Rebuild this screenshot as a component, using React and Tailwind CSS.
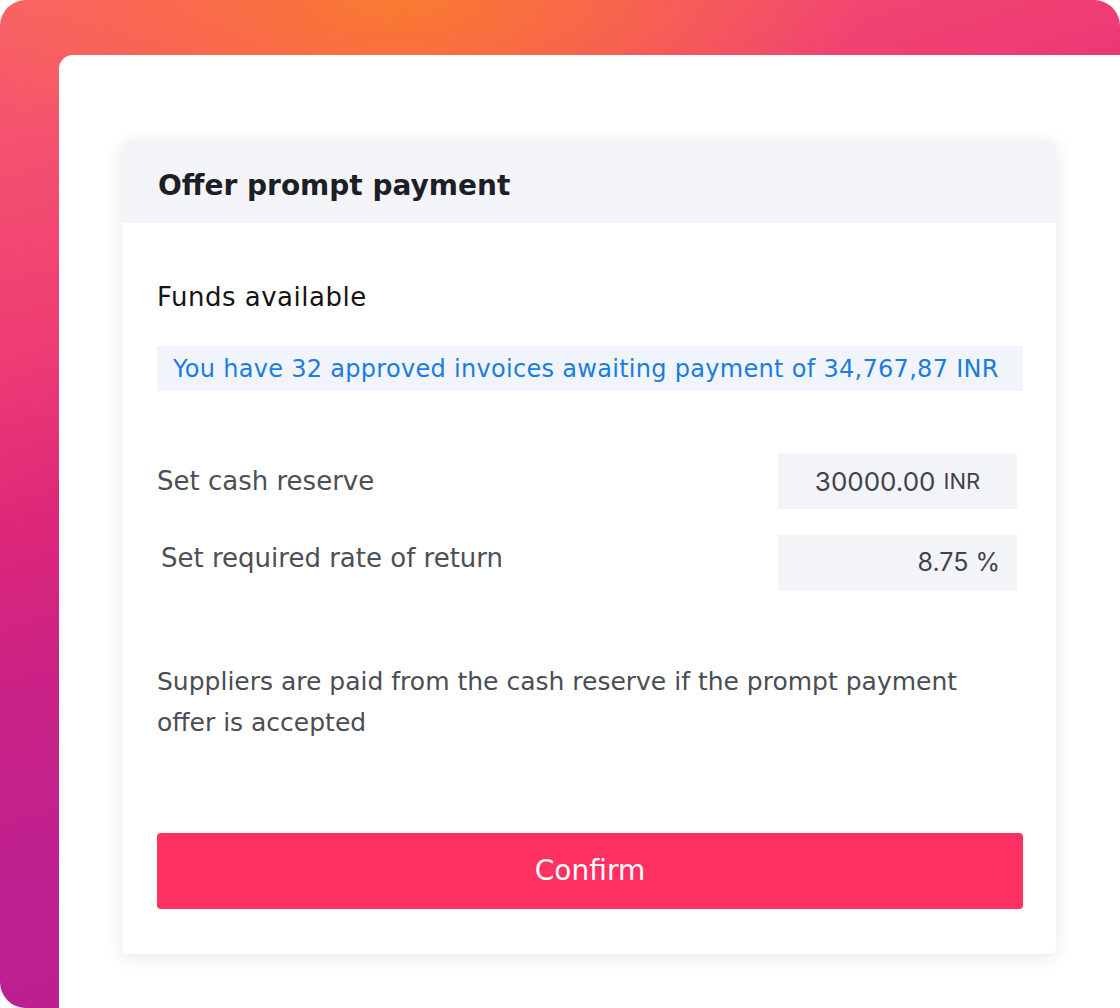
import React from "react";

const POP = "font-['DejaVu_Sans','Noto_Sans',sans-serif]";
const NUM = "font-['Inter','Noto_Sans',sans-serif]";

export default function App() {
  return (
    <div className={`h-[1008px] w-[1120px] overflow-hidden bg-white ${POP}`}>
      <div className="h-full w-full rounded-[26px] bg-[radial-gradient(ellipse_460px_220px_at_36%_0%,rgba(251,124,44,0.95)_0%,rgba(251,124,44,0)_100%),linear-gradient(163deg,#f8606b_0%,#ef3d74_26%,#dc2679_40%,#c92286_52%,#bd2090_68%,#bb2090_100%)] pl-[59px] pt-[55px]">
        <div className="h-full w-full rounded-tl-[14px] bg-white pl-[63px] pt-[85px]">
          <div className="w-[934px] overflow-hidden rounded-md bg-white shadow-[0_4px_18px_rgba(30,30,60,0.10)]">
            <div className="flex h-[83px] items-center bg-[#f4f5f9] px-9 pt-[9px]">
              <h1 className="text-[28px] font-semibold leading-[34px] text-[#1d1f27]">
                Offer prompt payment
              </h1>
            </div>

            <div className="px-[35px] pb-[45px] pt-[58px]">
              <div className="text-[26px] leading-[32px] tracking-[0.5px] text-[#141414]">
                Funds available
              </div>

              <div className="mt-[33px] flex h-[45px] w-[866px] items-center bg-[#f1f4fa] px-4 text-[24px] tracking-[0.3px] text-[#1a7de0]">
                You have 32 approved invoices awaiting payment of 34,767,87 INR
              </div>

              <div className="mt-[62px] flex flex-col gap-[26px]">
                <div className="flex items-center justify-between pr-[6px]">
                  <span className="text-[26px] text-[#4b4f58]">Set cash reserve</span>
                  <div className={`mr-[-2px] flex h-[56px] w-[239px] items-center justify-center bg-[#f3f4f8] text-[#3f434b] ${NUM}`}>
                    <span className="text-[26px]">30000.00</span>
                    <span className="ml-2 text-[22px]">INR</span>
                  </div>
                </div>
                <div className="flex items-center justify-between pr-[6px]">
                  <span className="mb-[9px] pl-1 text-[26px] text-[#4b4f58]">Set required rate of return</span>
                  <div className={`mr-[-2px] flex h-[56px] w-[239px] items-center justify-end bg-[#f3f4f8] pr-[17px] text-[25px] text-[#3f434b] ${NUM}`}>
                    8.75 %
                  </div>
                </div>
              </div>

              <p className="mt-[70px] max-w-[810px] text-[25px] leading-[41px] text-[#4a4d55]">
                Suppliers are paid from the cash reserve if the prompt payment offer is accepted
              </p>

              <button className="mt-[90px] flex h-[76px] w-[866px] items-center justify-center rounded bg-[#ff3163] text-[28px] text-white">
                Confirm
              </button>
            </div>
          </div>
        </div>
      </div>
    </div>
  );
}
